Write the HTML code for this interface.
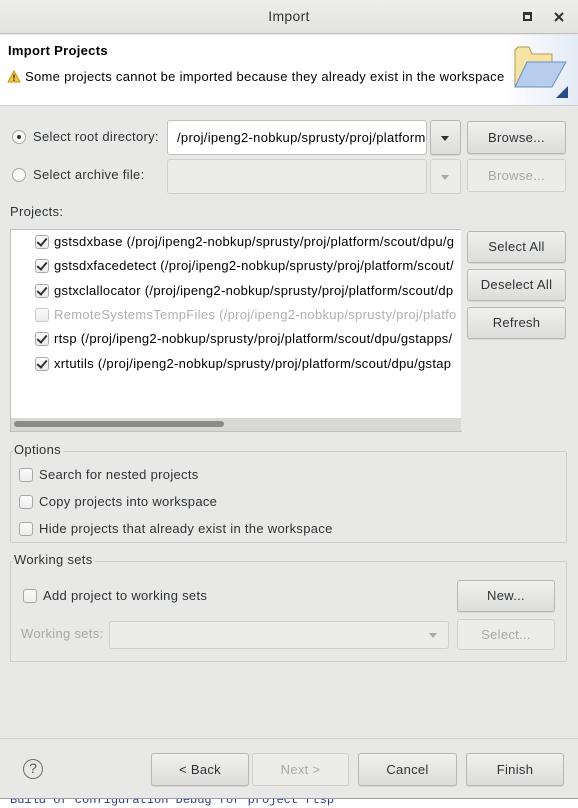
<!DOCTYPE html>
<html><head><meta charset="utf-8"><style>
*{box-sizing:border-box;margin:0;padding:0}
body{width:578px;height:808px;overflow:hidden;background:#e8e8e7;font-family:"Liberation Sans","DejaVu Sans",sans-serif;font-size:13px;letter-spacing:0.3px;color:#2e3436;position:relative}
.a{position:absolute;white-space:nowrap}
.btn{position:absolute;border:1px solid #b6b6b3;border-radius:3px;background:linear-gradient(#f0f0ef,#dcdcda);text-align:center;color:#2e3436;box-shadow:0 1px 0 rgba(0,0,0,.08)}
.dis{background:#ececeb;color:#a8a8a8;border-color:#cfcfcd;box-shadow:none}
.cb{position:absolute;width:14px;height:14px;border:1px solid #a8a8a6;border-radius:3px;background:linear-gradient(#fcfcfc,#ececec)}
.ck::after{content:"";position:absolute;left:3px;top:0px;width:4px;height:8px;border:solid #2e3436;border-width:0 2px 2px 0;transform:rotate(40deg)}
.grp{position:absolute;border:1px solid #cdcdcb;border-radius:2px}
.lg{position:absolute;background:#e8e8e7;padding:0 2px 0 1px;line-height:14px}
.it{position:absolute;left:54px;width:407px;overflow:hidden;color:#000;white-space:nowrap}
</style></head><body>
<div class="a" style="left:0;top:0;width:578px;height:34px;background:linear-gradient(#eeeeed,#e2e2e0);border-bottom:1px solid #c0c0bd"></div>
<div class="a" style="left:0;top:8px;width:578px;text-align:center;font-size:14px;color:#2e3436">Import</div>
<div class="a" style="left:523px;top:12px;width:9px;height:9px;border:2px solid #2e3436;border-top-width:3px"></div>
<svg class="a" style="left:554px;top:12px" width="10" height="10"><path d="M1 1L9 9M9 1L1 9" stroke="#2e3436" stroke-width="2"/></svg>
<div class="a" style="left:0;top:35px;width:578px;height:71px;background:#fff;border-bottom:1px solid #cfcfcf"></div>
<div class="a" style="left:504px;top:35px;width:74px;height:70px;background:linear-gradient(90deg,#fff,#e4ebf6)"></div>
<div class="a" style="left:8px;top:43px;font-weight:bold;font-size:13px;color:#000">Import Projects</div>
<svg class="a" style="left:7px;top:70px" width="14" height="13"><path d="M7 1 L13 12 L1 12Z" fill="#f5c542" stroke="#c98f0a"/><rect x="6.3" y="4.5" width="1.4" height="4" fill="#333"/><rect x="6.3" y="9.5" width="1.4" height="1.4" fill="#333"/></svg>
<div class="a" style="left:25px;top:69px;color:#000">Some projects cannot be imported because they already exist in the workspace</div>
<svg class="a" style="left:512px;top:42px" width="56" height="56"><path d="M3 8 L3 45 L40 45 L40 12 L20 12 L17 5 L6 5Z" fill="#f4e3a2" stroke="#b79a4a"/><path d="M3 45 L15 20 L54 20 L40 45Z" fill="#b7cdee" stroke="#6a8fc4"/><path d="M56 44 L56 56 L44 56Z" fill="#2a4a8a"/></svg>
<div class="a" style="left:12px;top:130px;width:14px;height:14px;border:1px solid #a8a8a6;border-radius:50%;background:#fafafa"></div>
<div class="a" style="left:17px;top:135px;width:4px;height:4px;border-radius:50%;background:#2e3436"></div>
<div class="a" style="left:33px;top:129px">Select root directory:</div>
<div class="a" style="left:167px;top:120px;width:260px;height:35px;background:#fff;border:1px solid #c0c0be;border-radius:3px;padding:9px 0 0 9px;overflow:hidden;color:#000">/proj/ipeng2-nobkup/sprusty/proj/platform</div>
<div class="btn" style="left:430px;top:120px;width:31px;height:35px"></div>
<div class="a" style="left:441px;top:136px;border:4px solid transparent;border-top:5px solid #2e3436"></div>
<div class="btn" style="left:467px;top:121px;width:99px;height:33px;line-height:31px">Browse...</div>
<div class="a" style="left:12px;top:168px;width:14px;height:14px;border:1px solid #a8a8a6;border-radius:50%;background:#fafafa"></div>
<div class="a" style="left:33px;top:167px">Select archive file:</div>
<div class="a" style="left:167px;top:159px;width:260px;height:35px;background:#ececeb;border:1px solid #cfcfcd;border-radius:3px"></div>
<div class="btn dis" style="left:430px;top:159px;width:31px;height:35px"></div>
<div class="a" style="left:441px;top:175px;border:4px solid transparent;border-top:5px solid #a8a8a8"></div>
<div class="btn dis" style="left:467px;top:159px;width:99px;height:33px;line-height:31px">Browse...</div>
<div class="a" style="left:10px;top:204px">Projects:</div>
<div class="a" style="left:10px;top:229px;width:452px;height:203px;background:#fff;border:1px solid #c0c0be"></div>
<div class="a" style="left:11px;top:418px;width:450px;height:13px;background:#d8d8d6"></div>
<div class="a" style="left:14px;top:421px;width:210px;height:6px;border-radius:3px;background:#8a8c8a"></div>
<div class="cb ck" style="left:35px;top:235px"></div><div class="it" style="top:234px">gstsdxbase (/proj/ipeng2-nobkup/sprusty/proj/platform/scout/dpu/g</div>
<div class="cb ck" style="left:35px;top:259px"></div><div class="it" style="top:258px">gstsdxfacedetect (/proj/ipeng2-nobkup/sprusty/proj/platform/scout/</div>
<div class="cb ck" style="left:35px;top:284px"></div><div class="it" style="top:283px">gstxclallocator (/proj/ipeng2-nobkup/sprusty/proj/platform/scout/dp</div>
<div class="cb" style="left:35px;top:308px;border-color:#c8c8c6"></div><div class="it" style="top:307px;color:#b0b0b0">RemoteSystemsTempFiles (/proj/ipeng2-nobkup/sprusty/proj/platfo</div>
<div class="cb ck" style="left:35px;top:332px"></div><div class="it" style="top:331px">rtsp (/proj/ipeng2-nobkup/sprusty/proj/platform/scout/dpu/gstapps/</div>
<div class="cb ck" style="left:35px;top:357px"></div><div class="it" style="top:356px">xrtutils (/proj/ipeng2-nobkup/sprusty/proj/platform/scout/dpu/gstap</div>
<div class="a" style="left:461px;top:229px;width:6px;height:202px;background:#e8e8e7"></div>
<div class="btn" style="left:467px;top:231px;width:99px;height:32px;line-height:30px">Select All</div>
<div class="btn" style="left:467px;top:269px;width:99px;height:32px;line-height:30px">Deselect All</div>
<div class="btn" style="left:467px;top:307px;width:99px;height:32px;line-height:30px">Refresh</div>
<div class="grp" style="left:10px;top:451px;width:557px;height:92px"></div>
<div class="lg" style="left:13px;top:443px">Options</div>
<div class="cb" style="left:19px;top:468px"></div><div class="a" style="left:39px;top:467px">Search for nested projects</div>
<div class="cb" style="left:19px;top:495px"></div><div class="a" style="left:39px;top:494px">Copy projects into workspace</div>
<div class="cb" style="left:19px;top:522px"></div><div class="a" style="left:39px;top:521px">Hide projects that already exist in the workspace</div>
<div class="grp" style="left:10px;top:561px;width:557px;height:101px"></div>
<div class="lg" style="left:13px;top:553px">Working sets</div>
<div class="cb" style="left:23px;top:589px"></div><div class="a" style="left:43px;top:588px">Add project to working sets</div>
<div class="btn" style="left:457px;top:580px;width:98px;height:32px;line-height:30px">New...</div>
<div class="a" style="left:21px;top:626px;color:#a8a8a8">Working sets:</div>
<div class="a" style="left:109px;top:621px;width:340px;height:28px;background:#ececeb;border:1px solid #cfcfcd;border-radius:3px"></div>
<div class="a" style="left:429px;top:633px;border:4px solid transparent;border-top:5px solid #a8a8a8"></div>
<div class="btn dis" style="left:457px;top:619px;width:98px;height:31px;line-height:29px">Select...</div>
<div class="a" style="left:0;top:738px;width:578px;height:1px;background:#d2d2d0"></div>
<div class="a" style="left:23px;top:759px;width:20px;height:20px;border:1.5px solid #6a6e6c;border-radius:50%;text-align:center;line-height:17px;font-size:14px;letter-spacing:0;color:#555">?</div>
<div class="btn" style="left:151px;top:753px;width:98px;height:33px;line-height:31px">&lt; Back</div>
<div class="btn dis" style="left:252px;top:753px;width:97px;height:33px;line-height:31px">Next &gt;</div>
<div class="btn" style="left:358px;top:753px;width:99px;height:33px;line-height:31px">Cancel</div>
<div class="btn" style="left:466px;top:753px;width:98px;height:33px;line-height:31px">Finish</div>
<div class="a" style="left:0;top:799px;width:578px;height:9px;background:#fff;overflow:hidden"><div style="font-family:'Liberation Mono',monospace;font-size:12px;letter-spacing:0;color:#2a3d9c;margin:-6px 0 0 10px">Build of configuration Debug for project rtsp</div></div>
<div class="a" style="left:0;top:798px;width:578px;height:1px;background:#a0a0a0"></div>
</body></html>
